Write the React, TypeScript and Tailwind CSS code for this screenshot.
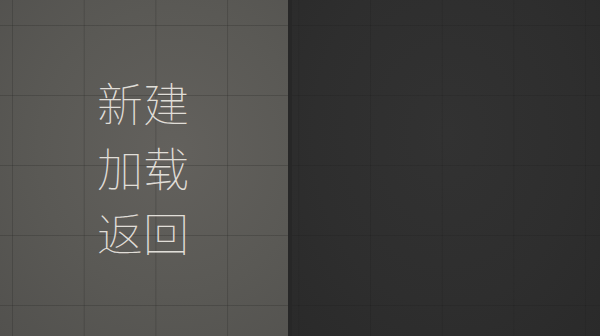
export default function App() {
  const items = ['新建', '加载', '返回']

  return (
    <div className="flex h-[336px] w-[600px] overflow-hidden bg-[#2e2e2e]">
      {/* left menu panel */}
      <div className="relative h-full w-[288px] shrink-0 bg-[radial-gradient(ellipse_at_60%_45%,#63615d_0%,#5a5955_55%,#52514e_100%)]">
        <div className="absolute inset-0 bg-[linear-gradient(to_right,rgba(40,40,38,0.28)_1px,transparent_1px),linear-gradient(to_bottom,rgba(40,40,38,0.28)_1px,transparent_1px)] bg-[length:71.7px_70px] bg-[position:12px_25px]" />
        <div className="relative flex flex-col pl-[97px] pt-[69px] font-['Noto_Sans_CJK_SC_Thin','Noto_Sans_CJK_SC',sans-serif] text-[46px] font-thin leading-[65px] text-[#e0ded8]">
          {items.map((t) => (
            <div key={t}>{t}</div>
          ))}
        </div>
      </div>
      {/* right dark panel */}
      <div className="relative h-full flex-1 border-l-[4px] border-[#272727] bg-[radial-gradient(ellipse_at_50%_40%,#323232_0%,#2e2e2e_60%,#2a2a2a_100%)]">
        <div className="absolute inset-0 bg-[linear-gradient(to_right,rgba(20,20,20,0.15)_1px,transparent_1px),linear-gradient(to_bottom,rgba(20,20,20,0.15)_1px,transparent_1px)] bg-[length:71.7px_70px] bg-[position:78px_25px]" />
      </div>
    </div>
  )
}
